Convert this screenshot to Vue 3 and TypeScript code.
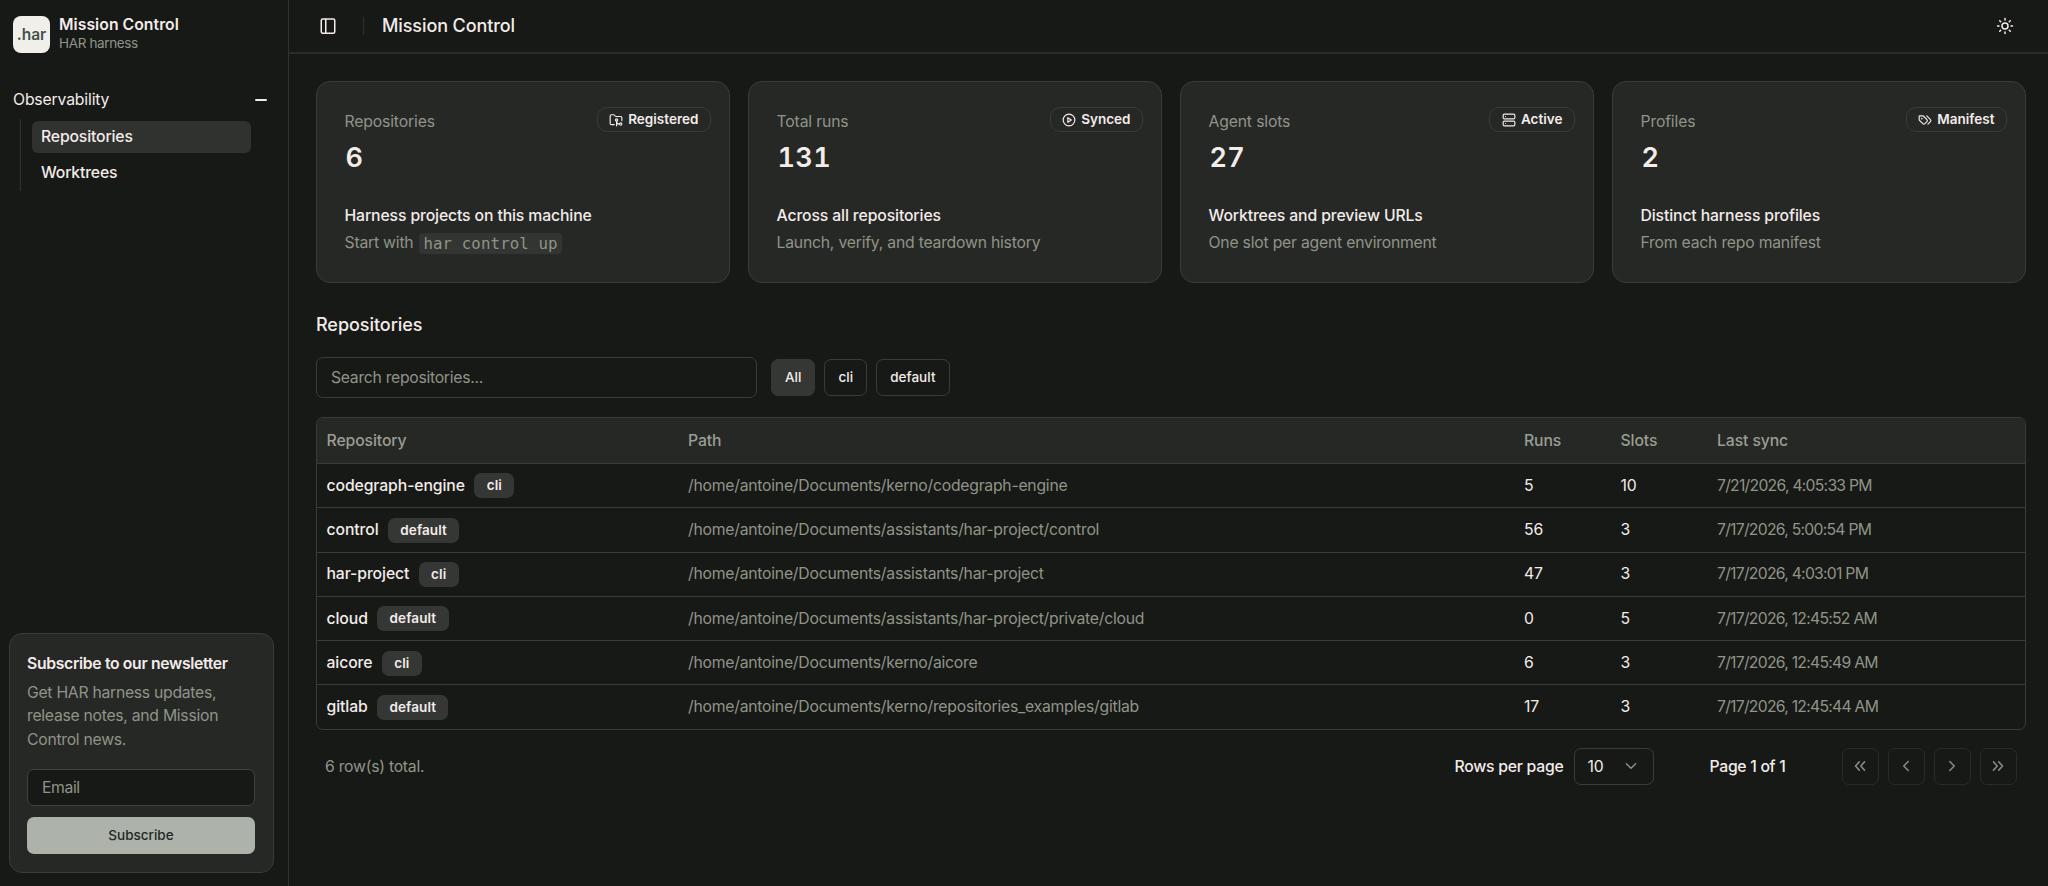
<script setup lang="ts">
import { ref, computed } from 'vue'

interface Stat {
  label: string
  value: number
  badge: string
  icon: 'folder' | 'play' | 'server' | 'tags'
  title: string
  note: string
  code?: string
}

interface Repo {
  name: string
  profile: 'cli' | 'default'
  path: string
  runs: number
  slots: number
  sync: string
}

const stats: Stat[] = [
  { label: 'Repositories', value: 6, badge: 'Registered', icon: 'folder', title: 'Harness projects on this machine', note: 'Start with', code: 'har control up' },
  { label: 'Total runs', value: 131, badge: 'Synced', icon: 'play', title: 'Across all repositories', note: 'Launch, verify, and teardown history' },
  { label: 'Agent slots', value: 27, badge: 'Active', icon: 'server', title: 'Worktrees and preview URLs', note: 'One slot per agent environment' },
  { label: 'Profiles', value: 2, badge: 'Manifest', icon: 'tags', title: 'Distinct harness profiles', note: 'From each repo manifest' },
]

const repos: Repo[] = [
  { name: 'codegraph-engine', profile: 'cli', path: '/home/antoine/Documents/kerno/codegraph-engine', runs: 5, slots: 10, sync: '7/21/2026, 4:05:33 PM' },
  { name: 'control', profile: 'default', path: '/home/antoine/Documents/assistants/har-project/control', runs: 56, slots: 3, sync: '7/17/2026, 5:00:54 PM' },
  { name: 'har-project', profile: 'cli', path: '/home/antoine/Documents/assistants/har-project', runs: 47, slots: 3, sync: '7/17/2026, 4:03:01 PM' },
  { name: 'cloud', profile: 'default', path: '/home/antoine/Documents/assistants/har-project/private/cloud', runs: 0, slots: 5, sync: '7/17/2026, 12:45:52 AM' },
  { name: 'aicore', profile: 'cli', path: '/home/antoine/Documents/kerno/aicore', runs: 6, slots: 3, sync: '7/17/2026, 12:45:49 AM' },
  { name: 'gitlab', profile: 'default', path: '/home/antoine/Documents/kerno/repositories_examples/gitlab', runs: 17, slots: 3, sync: '7/17/2026, 12:45:44 AM' },
]

const filters = ['All', 'cli', 'default'] as const
const active = ref<(typeof filters)[number]>('All')
const query = ref('')
const email = ref('')

const visible = computed(() =>
  repos.filter(
    (r) => (active.value === 'All' || r.profile === active.value) && (r.name + r.path).includes(query.value),
  ),
)

const pagers = [
  { label: 'First page', d: 'm11 6.5-5 5.5 5 5.5M18 6.5l-5 5.5 5 5.5' },
  { label: 'Previous page', d: 'm15 6-6 6 6 6' },
  { label: 'Next page', d: 'm9 6 6 6-6 6' },
  { label: 'Last page', d: 'm6 6.5 5 5.5-5 5.5M13 6.5l5 5.5-5 5.5' },
]
</script>

<template>
  <div class="app">
    <aside class="sidebar">
      <div class="brand">
        <div class="logo">.har</div>
        <div class="brand-text">
          <div class="brand-name">Mission Control</div>
          <div class="brand-sub">HAR harness</div>
        </div>
      </div>

      <nav>
        <div class="group">
          <span>Observability</span>
          <i class="minus"></i>
        </div>
        <ul class="links">
          <li class="current">Repositories</li>
          <li>Worktrees</li>
        </ul>
      </nav>

      <section class="news">
        <h2>Subscribe to our newsletter</h2>
        <p>Get HAR harness updates,<br />release notes, and Mission<br />Control news.</p>
        <input v-model="email" type="email" placeholder="Email" />
        <button type="button">Subscribe</button>
      </section>
    </aside>

    <main>
      <header>
        <svg class="ic panel" viewBox="0 0 24 24"><rect x="3" y="2.5" width="18" height="19" rx="2" /><path d="M9 3v18" /></svg>
        <i class="sep"></i>
        <h1>Mission Control</h1>
        <svg class="ic sun" viewBox="0 0 24 24"><circle cx="12" cy="12" r="4" /><path d="M12 2v2M12 20v2M4.93 4.93l1.41 1.41M17.66 17.66l1.41 1.41M2 12h2M20 12h2M6.34 17.66l-1.41 1.41M19.07 4.93l-1.41 1.41" /></svg>
      </header>

      <div class="content">
        <div class="cards">
          <article v-for="s in stats" :key="s.label" class="card">
            <div class="card-head">
              <span class="label">{{ s.label }}</span>
              <span class="badge">
                <svg class="ic" viewBox="0 0 24 24">
                  <template v-if="s.icon === 'folder'">
                    <path d="M9 20H4a2 2 0 0 1-2-2V5a2 2 0 0 1 2-2h3.9a2 2 0 0 1 1.69.9l.81 1.2a2 2 0 0 0 1.67.9H20a2 2 0 0 1 2 2v5" />
                    <circle cx="13" cy="12" r="2" /><path d="M18 19c-2.8 0-5-2.2-5-5v8" /><circle cx="20" cy="19" r="2" />
                  </template>
                  <template v-else-if="s.icon === 'play'">
                    <circle cx="12" cy="12" r="10" /><path d="m10 8 6 4-6 4z" />
                  </template>
                  <template v-else-if="s.icon === 'server'">
                    <rect x="2" y="2" width="20" height="8" rx="2" /><rect x="2" y="14" width="20" height="8" rx="2" /><path d="M6 6h.01M6 18h.01" />
                  </template>
                  <template v-else>
                    <path d="m15 5 6.3 6.3a2.4 2.4 0 0 1 0 3.4L17 19" />
                    <path d="M9.586 5.586A2 2 0 0 0 8.172 5H3a1 1 0 0 0-1 1v5.172a2 2 0 0 0 .586 1.414L8.29 18.29a2.426 2.426 0 0 0 3.42 0l3.58-3.58a2.426 2.426 0 0 0 0-3.42z" />
                    <circle cx="6.5" cy="9.5" r=".5" />
                  </template>
                </svg>
                {{ s.badge }}
              </span>
            </div>
            <div class="value">{{ s.value }}</div>
            <div class="card-title">{{ s.title }}</div>
            <div class="note">{{ s.note }}<code v-if="s.code">{{ s.code }}</code></div>
          </article>
        </div>

        <h2 class="section-title">Repositories</h2>

        <div class="tools">
          <input v-model="query" class="search" placeholder="Search repositories..." />
          <button
            v-for="f in filters"
            :key="f"
            type="button"
            class="filter"
            :class="{ on: f === active }"
            @click="active = f"
          >{{ f }}</button>
        </div>

        <div class="table">
          <div class="row head">
            <span>Repository</span><span>Path</span><span>Runs</span><span>Slots</span><span>Last sync</span>
          </div>
          <div v-for="r in visible" :key="r.name" class="row">
            <span class="name">{{ r.name }}<b class="tag">{{ r.profile }}</b></span>
            <span class="path">{{ r.path }}</span>
            <span>{{ r.runs }}</span>
            <span>{{ r.slots }}</span>
            <span class="date">{{ r.sync }}</span>
          </div>
        </div>

        <footer>
          <span class="total">{{ visible.length }} row(s) total.</span>
          <span class="per">Rows per page</span>
          <div class="select">
            <span>10</span>
            <svg class="ic" viewBox="0 0 24 24"><path d="m5 8.5 7 7 7-7" /></svg>
          </div>
          <span class="page">Page 1 of 1</span>
          <div class="pagers">
            <button v-for="p in pagers" :key="p.label" type="button" :aria-label="p.label">
              <svg class="ic" viewBox="0 0 24 24"><path :d="p.d" /></svg>
            </button>
          </div>
        </footer>
      </div>
    </main>
  </div>
</template>

<style>
body { background: #171916; }
</style>

<style scoped>
* { box-sizing: border-box; }
h1, h2, p, ul { margin: 0; padding: 0; font-weight: 500; }
button, input { font: inherit; color: inherit; outline: none; }

.app {
  display: flex;
  height: 886px;
  overflow: hidden;
  background: #171916;
  color: #f3ecea;
  font: 400 15.75px/22.5px Inter, "Liberation Sans", sans-serif;
  letter-spacing: -0.16px;
}
.ic { display: block; flex: none; fill: none; stroke: currentColor; stroke-width: 2; stroke-linecap: round; stroke-linejoin: round; }

.sidebar { display: flex; flex-direction: column; flex: none; width: 289px; border-right: 1px solid #30322f; }
.brand { display: flex; gap: 9px; padding: 14px 0 0 13px; }
.logo {
  width: 37px; height: 37px; margin-top: 2px; border-radius: 8px; background: #f1efea; color: #43524a;
  font-size: 15.5px; font-weight: 600; line-height: 38px; text-align: center; letter-spacing: 0;
}
.brand-name { padding-top: 1px; font-weight: 600; line-height: 20px; letter-spacing: 0.04px; }
.brand-sub { font-size: 13.5px; line-height: 17px; letter-spacing: -0.36px; color: #8f9488; }
.group { display: flex; align-items: center; justify-content: space-between; height: 36px; margin-top: 29px; padding: 0 21px 0 13px; }
.minus { width: 12px; height: 2px; border-radius: 1px; background: #f3ecea; }
.links { margin: 1px 37px 0 20px; padding: 2px 0 2px 11px; border-left: 1px solid #30322f; list-style: none; }
.links li { display: flex; align-items: center; height: 32px; padding-left: 9px; border-radius: 6px; margin-bottom: 4px; }
.links li:last-child { margin-bottom: 0; }
.links .current { background: #30322f; }

.news {
  display: flex; flex-direction: column; width: 265px; height: 240px; margin: auto 0 13px 9px; padding: 18px 17px 0;
  border: 1px solid #3a3c38; border-radius: 13px; background: #262826;
}
.news h2 { font-size: 15.75px; font-weight: 600; line-height: 24px; letter-spacing: -0.33px; }
.news p { margin-top: 5px; line-height: 23.3px; font-weight: 400; letter-spacing: -0.28px; color: #8f9488; }
.news input {
  width: 228px; height: 37px; margin-top: 18px; padding: 0 14px; border: 1px solid #3f413d; border-radius: 7px;
  background: #171916; letter-spacing: -0.4px;
}
input::placeholder { color: #8f9488; opacity: 1; }
.news button {
  width: 228px; height: 37px; margin-top: 11px; border: 0; border-radius: 7px; background: #adb3ab; color: #232825;
  font-size: 13.5px; font-weight: 500;
}

main { flex: 1; min-width: 0; }
header { display: flex; align-items: center; height: 54px; padding: 0 34px 1px 30px; border-bottom: 2px solid #2a2c29; }
.panel { width: 18px; height: 18px; }
.sep { width: 1px; height: 18px; margin: 0 18px 0 26px; background: #2e302d; }
h1 { padding-top: 2px; font-size: 18px; font-weight: 500; letter-spacing: -0.1px; }
.sun { width: 18px; height: 18px; margin-left: auto; }

.content { padding: 27px 22px 0 27px; }
.cards { display: grid; grid-template-columns: repeat(4, 1fr); gap: 18px; }
.card { height: 202px; padding: 25px 18px 0 27.5px; border: 1px solid #3a3c38; border-radius: 14px; background: #262826; }
.card-head { display: flex; justify-content: space-between; height: 26px; }
.label { margin-top: 4px; color: #8f9488; }
.badge {
  display: flex; align-items: center; gap: 5px; height: 25px; padding: 0 11.5px; border: 1px solid #3a3c38;
  border-radius: 10px; font-size: 13.5px; font-weight: 600; letter-spacing: 0.02px;
}
.badge .ic { width: 14px; height: 14px; margin-top: 1px; }
.value { margin-top: 7px; padding-left: 1px; font-size: 27px; font-weight: 600; line-height: 36px; letter-spacing: 0.4px; font-variant-numeric: tabular-nums; }
.card-title { margin-top: 27px; font-weight: 500; line-height: 25px; letter-spacing: -0.12px; }
.note { display: flex; align-items: center; height: 24px; margin-top: 3px; letter-spacing: -0.22px; color: #8f9488; }
.note code {
  margin-left: 5.5px; padding: 0 4.5px; border-radius: 4px; background: #333532;
  font: 15.75px/21px "DejaVu Sans Mono", "Liberation Mono", monospace; letter-spacing: 0.11px;
}

.section-title { margin-top: 30px; font-size: 18px; font-weight: 500; line-height: 24px; letter-spacing: -0.05px; }
.tools { display: flex; align-items: center; gap: 9px; margin-top: 20px; }
.search {
  width: 441px; height: 41px; margin-right: 5px; padding: 0 14px; border: 1px solid #3a3c38; border-radius: 7px;
  background: transparent; letter-spacing: -0.29px;
}
.filter {
  height: 37px; padding: 0 13px 1px; border: 1px solid #3a3c38; border-radius: 7px; background: transparent;
  font-size: 13.5px; font-weight: 500; letter-spacing: 0.03px;
}
.filter.on { border-color: #353734; background: #353734; }

.table { margin-top: 19px; border: 1px solid #3a3c38; border-radius: 7px; overflow: hidden; }
.row {
  display: grid; grid-template-columns: 361.5px 836px 96.5px 96.5px 1fr; align-items: center; height: 44.3px;
  padding: 0.5px 0 0 9.5px; border-top: 1px solid #3a3c38;
}
.row.head { height: 45px; padding-top: 1px; border-top: 0; background: #262826; color: #9a9e93; font-weight: 500; letter-spacing: -0.1px; }
.name { display: flex; align-items: center; font-weight: 500; letter-spacing: -0.1px; }
.tag {
  height: 25px; margin-left: 9.5px; padding: 0 12.3px; border-radius: 7px; background: #353734;
  font-size: 13.5px; font-weight: 600; line-height: 24px; letter-spacing: 0.1px;
}
.path { color: #8f9488; letter-spacing: -0.24px; }
.date { color: #8f9488; letter-spacing: -0.75px; }

footer { display: flex; align-items: center; height: 37px; margin-top: 18px; padding: 0 9.5px 0 9px; font-weight: 500; }
.total, .per, .page, .select span { padding-top: 1px; }
.total { font-weight: 400; letter-spacing: -0.25px; color: #8f9488; }
.per { margin-left: auto; letter-spacing: -0.24px; }
.select {
  display: flex; align-items: center; justify-content: space-between; width: 80px; height: 37px; margin-left: 10px;
  padding: 0 14px 0 13px; border: 1px solid #3a3c38; border-radius: 7px; font-weight: 400;
}
.select .ic { width: 16px; height: 16px; color: #8f9488; }
.page { width: 77px; margin-left: 56px; letter-spacing: -0.29px; white-space: nowrap; }
.pagers { display: flex; gap: 9px; margin-left: 55px; }
.pagers button {
  display: flex; align-items: center; justify-content: center; width: 37px; height: 37px; padding: 0;
  border: 1px solid #292b28; border-radius: 7px; background: transparent; color: #8c8a87;
}
.pagers .ic { width: 18px; height: 18px; }
</style>
